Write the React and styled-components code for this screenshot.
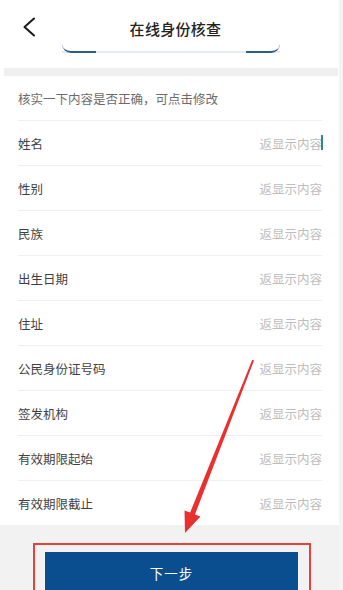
import React from "react";
import styled, { createGlobalStyle } from "styled-components";

const Global = createGlobalStyle`
  html, body { margin: 0; padding: 0; background: #f4f4f4; }
  body { font-family: "Noto Sans CJK SC", "Noto Sans", sans-serif; }
`;

const Page = styled.div`
  position: relative;
  width: 339px;
  height: 590px;
  overflow: hidden;
  background: #fff;
  display: flex;
  flex-direction: column;
  & > * { flex-shrink: 0; }
`;

const Header = styled.div`
  height: 44px;
  display: flex;
  align-items: center;
  justify-content: center;
  position: relative;
  padding-top: 12px;
  box-sizing: border-box;
`;

const Back = styled.div`
  position: absolute;
  left: 21px;
  top: 17px;
  width: 16px;
  height: 20px;
  display: flex;
`;

const Title = styled.div`
  font-size: 15px;
  font-weight: 500;
  color: #222;
  letter-spacing: 0.3px;
  margin-left: 12px;
`;

const CardStub = styled.div`
  position: relative;
  margin: 0 0 0 62px;
  width: 218px;
  height: 9px;
  box-sizing: border-box;
  border-bottom: 2px solid #e9ecef;
  &::before, &::after {
    content: "";
    position: absolute;
    bottom: -2px;
    width: 34px;
    height: 7px;
    border-bottom: 2px solid #2d5f86;
  }
  &::before {
    left: 0;
    border-bottom-left-radius: 9px;
  }
  &::after {
    right: 0;
    border-bottom-right-radius: 9px;
  }
`;

const Band = styled.div`
  margin: 15px 1px 0 4px;
  height: 8px;
  background: #efefef;
`;

const Hint = styled.div`
  height: 44px;
  padding-left: 18px;
  display: flex;
  align-items: center;
  font-size: 12.5px;
  color: #6b6b6b;
`;

const List = styled.div`
  margin: 0 17px 0 18px;
`;

const Row = styled.div`
  height: 45px;
  box-sizing: border-box;
  border-top: 1px solid #efefef;
  display: flex;
  align-items: center;
  justify-content: space-between;
  position: relative;
`;

const Label = styled.span`
  font-size: 12.5px;
  color: #3f3f3f;
`;

const Value = styled.span`
  font-size: 12.5px;
  color: #bdbdbd;
  position: relative;
`;

const Cursor = styled.i`
  position: absolute;
  right: -1px;
  top: 1px;
  width: 2px;
  height: 15px;
  background: #2e8c7c;
`;

const Footer = styled.div`
  flex: 1 0 auto;
  background: #f2f2f2;
  padding: 18px 28px 0 33px;
`;

const Highlight = styled.div`
  border: 2.5px solid #e2413f;
  border-bottom: none;
  padding: 7px 11px 0 10px;
  height: 60px;
`;

const NextButton = styled.button`
  width: 100%;
  height: 42px;
  border: none;
  background: #0b4e90;
  color: #fff;
  font-family: inherit;
  font-size: 13.5px;
  letter-spacing: 1px;
`;

const Arrow = styled.svg`
  position: absolute;
  left: 0;
  top: 0;
  pointer-events: none;
`;

const rows = [
  "姓名",
  "性别",
  "民族",
  "出生日期",
  "住址",
  "公民身份证号码",
  "签发机构",
  "有效期限起始",
  "有效期限截止",
];

export default function App() {
  return (
    <>
      <Global />
      <Page>
        <Header>
          <Back>
            <svg width="16" height="20" viewBox="0 0 16 20">
              <path d="M13 1.5 L3.5 10 L13 18.5" fill="none" stroke="#1a1a1a" strokeWidth="2" strokeLinecap="round" strokeLinejoin="round" />
            </svg>
          </Back>
          <Title>在线身份核查</Title>
        </Header>
        <CardStub />
        <Band />
        <Hint>核实一下内容是否正确，可点击修改</Hint>
        <List>
          {rows.map((r, i) => (
            <Row key={r}>
              <Label>{r}</Label>
              <Value>
                返显示内容
                {i === 0 && <Cursor />}
              </Value>
            </Row>
          ))}
        </List>
        <Footer>
          <Highlight>
            <NextButton>下一步</NextButton>
          </Highlight>
        </Footer>
        <Arrow width="339" height="590" viewBox="0 0 339 590">
          <polygon
            points="252.3,359.8 254,360.4 195,514.4 200.5,516.6 185,533 184.5,510.4 190.1,512.6"
            fill="#e8302f"
          />
        </Arrow>
      </Page>
    </>
  );
}
